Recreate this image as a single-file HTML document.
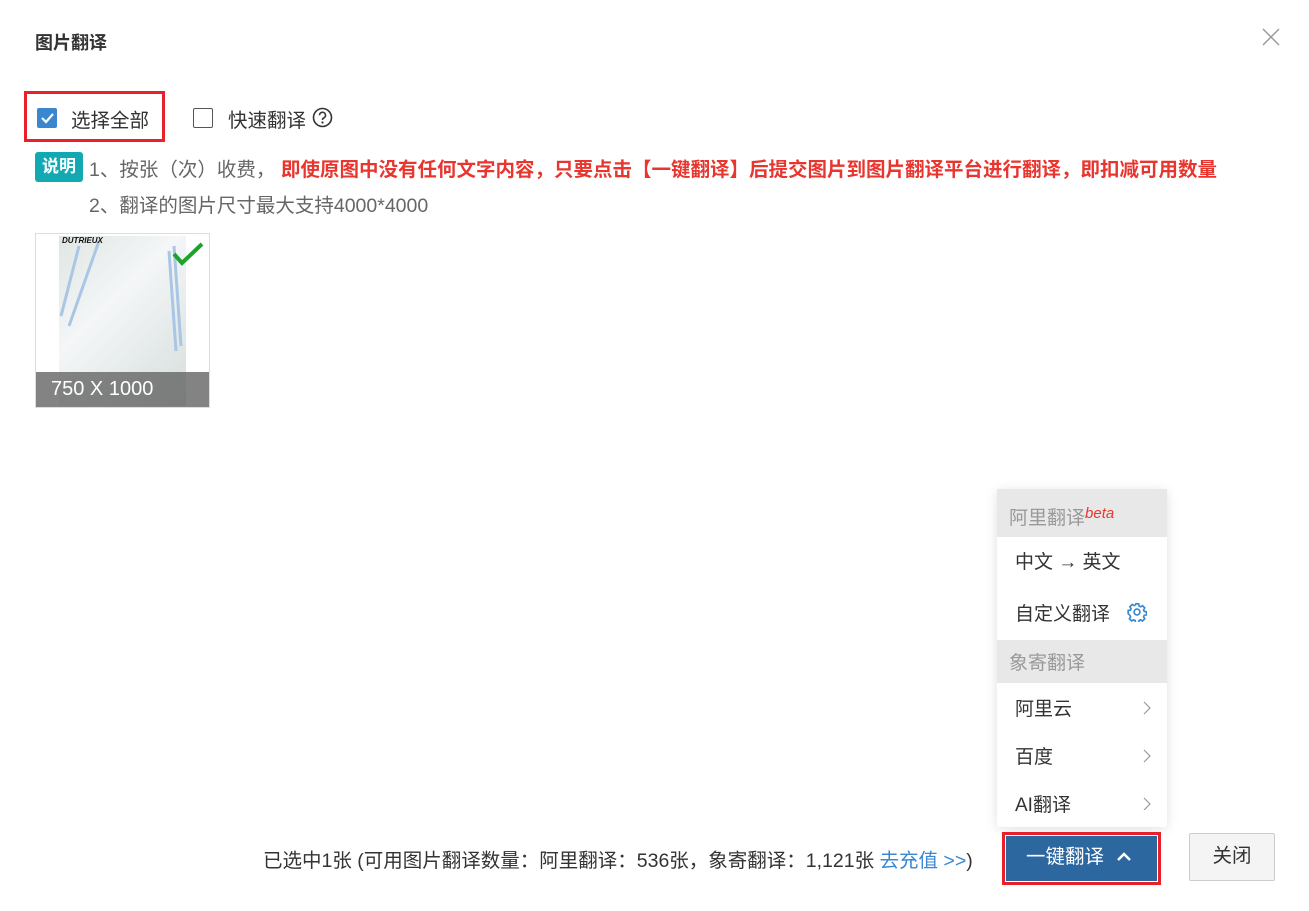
<!DOCTYPE html>
<html><head><meta charset="utf-8"><style>
*{box-sizing:border-box;margin:0;padding:0}
body{width:1309px;height:911px;background:#fff;font-family:"Liberation Sans","Noto Sans CJK SC",sans-serif;position:relative;overflow:hidden;color:#333}
.a{position:absolute;white-space:nowrap}
.menu div{position:absolute;left:0;width:170px}
</style></head><body>
<div class="a" style="left:35px;top:29px;font-size:18px;font-weight:bold;color:#333">图片翻译</div>
<svg class="a" style="left:1262px;top:28px" width="18" height="18"><path d="M1 1L17 17M17 1L1 17" stroke="#999" stroke-width="1.5"/></svg>
<div class="a" style="left:24px;top:91px;width:141px;height:51px;border:3px solid #e8202a"></div>
<div class="a" style="left:37px;top:108px;width:20px;height:20px;background:#3a87d0;border-radius:2px"></div>
<svg class="a" style="left:37px;top:108px" width="20" height="20"><path d="M5 10l4 4 7-8" stroke="#fff" stroke-width="2.2" fill="none"/></svg>
<div class="a" style="left:71px;top:104px;font-size:19.5px;color:#333">选择全部</div>
<div class="a" style="left:193px;top:108px;width:20px;height:20px;border:1px solid #555;border-radius:2px"></div>
<div class="a" style="left:228px;top:104px;font-size:19.5px;color:#333">快速翻译</div>
<svg class="a" style="left:312px;top:107px" width="21" height="21"><circle cx="10.5" cy="10.5" r="9" stroke="#333" stroke-width="1.6" fill="none"/><path d="M7.5 8.3a3 3 0 1 1 4 2.8c-.8.4-1 .9-1 1.8" stroke="#333" stroke-width="1.6" fill="none"/><circle cx="10.5" cy="15.5" r="1.1" fill="#333"/></svg>
<div class="a" style="left:35px;top:152px;width:48px;height:30px;background:#13a9b3;border-radius:3px;color:#fff;font-size:17px;font-weight:bold;text-align:center;line-height:30px">说明</div>
<div class="a" style="left:89px;top:153px;font-size:19.5px;color:#666">1、按张（次）收费，</div>
<div class="a" style="left:281px;top:153px;font-size:19.5px;color:#e8362f;font-weight:bold">即使原图中没有任何文字内容，只要点击【一键翻译】后提交图片到图片翻译平台进行翻译，即扣减可用数量</div>
<div class="a" style="left:89px;top:189px;font-size:19.5px;color:#666">2、翻译的图片尺寸最大支持4000*4000</div>
<div class="a" style="left:35px;top:233px;width:175px;height:175px;border:1px solid #ddd;background:#fff"></div>
<div class="a" style="left:59px;top:236px;width:127px;height:170px;background:linear-gradient(135deg,#dfe6e2,#f4f6f8 40%,#d5dedb)"></div>
<svg class="a" style="left:59px;top:236px" width="127" height="170"><path d="M20 10L2 80M40 5L10 90M115 10L122 110M110 15L117 115" stroke="#a9c6e4" stroke-width="3" fill="none"/></svg>
<div class="a" style="left:62px;top:236px;font-size:8px;font-weight:bold;font-style:italic;color:#111">DUTRIEUX</div>
<svg class="a" style="left:172px;top:242px" width="32" height="24"><path d="M2 12l8 9L30 2" stroke="#1aa52a" stroke-width="4" fill="none"/></svg>
<div class="a" style="left:36px;top:372px;width:173px;height:35px;background:rgba(100,100,100,.8);color:#fff;font-size:20px;line-height:35px;padding-left:15px">750 X 1000</div>
<div class="a" style="left:997px;top:489px;width:170px;height:338px;background:#fff;box-shadow:0 2px 12px rgba(0,0,0,.12);border-radius:3px"></div>
<div class="a menu" style="left:997px;top:489px;width:170px">
<div style="top:0;height:48px;background:#e8e8e8"></div>
<div style="top:14px;left:12px;font-size:19px;color:#999;width:auto">阿里翻译<i style="color:#e8362f;font-size:15px;vertical-align:6px">beta</i></div>
<div style="top:58px;left:18px;font-size:19px;color:#333;width:auto">中文 → 英文</div>
<div style="top:110px;left:18px;font-size:19px;color:#333;width:auto">自定义翻译</div>
<svg style="position:absolute;left:130px;top:113px" width="20" height="20" viewBox="0 0 24 24"><path d="M12 2l2 .3.5 2.6 1.8.9 2.3-1.4 2.7 2.7-1.4 2.3.8 1.8 2.7.5v3.8l-2.7.5-.8 1.8 1.4 2.3-2.7 2.7-2.3-1.4-1.8.8-.5 2.7h-3.8l-.5-2.7-1.8-.8-2.3 1.4-2.7-2.7 1.4-2.3-.8-1.8L1.4 14v-3.8l2.7-.5.8-1.8L3.5 5.6l2.7-2.7 2.3 1.4 1.8-.9L10.8 2z" fill="none" stroke="#3a87d0" stroke-width="2"/><circle cx="12" cy="12" r="3.5" fill="none" stroke="#3a87d0" stroke-width="2"/></svg>
<div style="top:151px;height:43px;background:#e8e8e8"></div>
<div style="top:159px;left:12px;font-size:19px;color:#999;width:auto">象寄翻译</div>
<div style="top:205px;left:18px;font-size:19px;color:#333;width:auto">阿里云</div>
<div style="top:253px;left:18px;font-size:19px;color:#333;width:auto">百度</div>
<div style="top:301px;left:18px;font-size:19px;color:#333;width:auto">AI翻译</div>
<svg style="position:absolute;left:145px;top:211px" width="10" height="110"><path d="M2 2l6 6-6 6M2 50l6 6-6 6M2 98l6 6-6 6" stroke="#999" stroke-width="1.2" fill="none"/></svg>
</div>
<div class="a" style="left:263px;top:844px;font-size:19.5px;color:#333">已选中1张 (可用图片翻译数量：阿里翻译：536张，象寄翻译：1,121张 <span style="color:#3a87d0">去充值 &gt;&gt;</span>)</div>
<div class="a" style="left:1002px;top:832px;width:159px;height:53px;border:3px solid #e8202a"></div>
<div class="a" style="left:1006px;top:836px;width:151px;height:45px;background:#2d67a0;color:#fff;font-size:19.5px;line-height:43px;padding-left:20px">一键翻译</div>
<svg class="a" style="left:1116px;top:851px" width="16" height="12"><path d="M2 9l6-6 6 6" stroke="#fff" stroke-width="2.5" fill="none"/></svg>
<div class="a" style="left:1189px;top:833px;width:86px;height:48px;border:1px solid #ccc;background:#f4f4f4;border-radius:2px;text-align:center;line-height:44px;font-size:19.5px;color:#333">关闭</div>
</body></html>
